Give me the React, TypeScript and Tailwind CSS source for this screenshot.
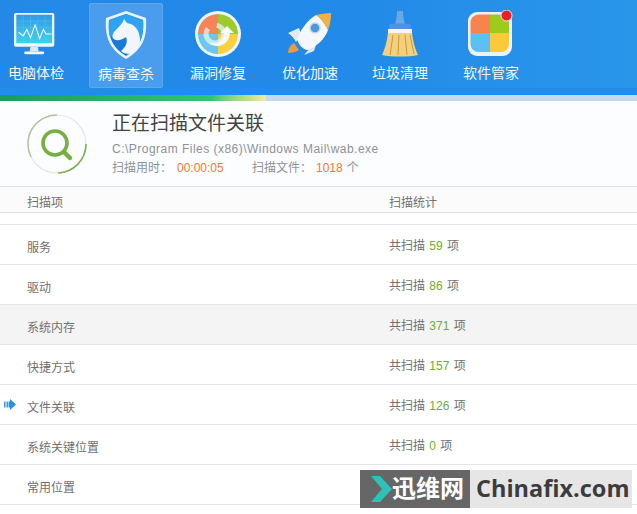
import React from 'react';

const font = { fontFamily: '"Liberation Sans", "Noto Sans CJK SC", sans-serif' };

function Monitor() {
  return (
    <svg width="46" height="44" viewBox="2 0 48 48">
      <defs>
        <linearGradient id="scr" x1="0" y1="0" x2="0" y2="1">
          <stop offset="0" stopColor="#2f9be8" />
          <stop offset="1" stopColor="#3fd0ea" />
        </linearGradient>
      </defs>
      <rect x="2" y="1" width="44" height="37" rx="2" fill="#eef6fc" />
      <rect x="4.5" y="3" width="39" height="31" fill="url(#scr)" />
      <path d="M5 10h38M5 17h38M5 24h38M12 3v31M20 3v31M28 3v31M36 3v31" stroke="#7cc6f2" strokeWidth="0.5" opacity="0.7" />
      <path d="M7 22l5 4 4-7 4 9 5-14 5 15 4-10 3 5h6" fill="none" stroke="#eefaff" strokeWidth="1.2" />
      <path d="M20 38h8l1 5h-10z" fill="#dfe9f1" />
      <rect x="13" y="43" width="22" height="3" rx="1.5" fill="#f4f8fb" />
    </svg>
  );
}

function Shield() {
  return (
    <svg width="44" height="50" viewBox="0 0 44 50">
      <path d="M22 1l20 7c1 16-1 30-20 41C3 38 1 24 2 8z" fill="#e8f3fb" />
      <path d="M22 4l17 6c1 14-1 26-17 36C6 36 4 24 5 10z" fill="#1b78d6" />
      <path d="M22 4l17 6c1 14-1 26-17 36 5-9 6-16-2-24L6 27c-2-6-1-12-1-17z" fill="#2ea3f0" />
      <path d="M20 9l3 4c8 1 13 8 13 17 0 6-3 10-8 13-5 2-9 0-11-2 5-4 7-9 5-14-3 2-7 4-10 3-4-1-4-4-3-6 2-5 9-8 11-15z" fill="#f2f6fa" />
    </svg>
  );
}

function Repair() {
  return (
    <svg width="46" height="46" viewBox="0 0 46 46">
      <circle cx="23" cy="23" r="23" fill="#eef5fa" />
      <path d="M23 23V3A20 20 0 0 0 3 23z" fill="#f58559" />
      <path d="M23 23V3a20 20 0 0 1 20 20z" fill="#9ccb2d" />
      <path d="M23 23h20a20 20 0 0 1-20 20z" fill="#fbd03f" />
      <path d="M23 23v20A20 20 0 0 1 3 23z" fill="#6cc6f2" />
      <circle cx="20" cy="23" r="9" fill="none" stroke="#e6f2f8" strokeWidth="5" opacity="0.75" strokeDasharray="34 10" />
      <path d="M14 31c6 3 14 1 15-9h-4l7-7 7 7h-4c-1 12-13 17-21 9z" fill="#f7f9fb" />
    </svg>
  );
}

function Rocket() {
  return (
    <svg width="44" height="44" viewBox="0 0 44 44">
      <path d="M0 21l11-5 2 6-5 8c-2-4-5-7-8-9z" fill="#e3ebf2" />
      <path d="M16 43l10-12 2 2-2 6c-3 1-7 3-10 4z" fill="#dbe6ee" />
      <path d="M0 41c0-4 3-9 6-10l5 7c-3 2-7 3-11 3z" fill="#ee9a3f" />
      <path d="M28 3C19 8 12 19 9 27c1 5 6 11 11 11 9-4 17-11 20-20-3-6-7-12-12-15z" fill="#f5f8fb" />
      <path d="M43 1c-5 0-10 1-15 2 5 3 9 9 12 15 2-5 3-11 3-17z" fill="#f4b13c" />
      <circle cx="27" cy="16" r="5" fill="#4d97dd" stroke="#c9d8e4" strokeWidth="1.500" />
    </svg>
  );
}

function Broom() {
  return (
    <svg width="38" height="46" viewBox="0 0 38 46">
      <path d="M16 0h6v4l2 10H14l2-10z" fill="#6ca9e4" />
      <path d="M8 14c3-2 19-2 22 0v6H8z" fill="#4e93dc" />
      <rect x="7" y="18" width="24" height="4" fill="#f4f6f8" />
      <path d="M7 22h24c1 8 3 16 6 22-10 2-26 2-36 0 3-6 5-14 6-22z" fill="#f5d07c" />
      <path d="M12 24l-3 20M18 24l-1 20M24 24l2 20M29 24l4 19" stroke="#c9993f" strokeWidth="1" />
    </svg>
  );
}

function Tiles() {
  return (
    <svg width="48" height="48" viewBox="0 0 48 48">
      <rect x="1" y="2" width="44" height="44" rx="9" fill="#eef2f5" />
      <path d="M3.500 13a8 8 0 0 1 8-8.500H23V23H3.500z" fill="#f8834f" />
      <path d="M23 4.500h11a8 8 0 0 1 8 8.500V23H23z" fill="#9ccb1c" />
      <path d="M3.500 23H23v19H11.500a8 8 0 0 1-8-8z" fill="#5dbff2" />
      <path d="M23 23h19v11a8 8 0 0 1-8 8H23z" fill="#fcc93a" />
      <circle cx="39.500" cy="5.500" r="5.500" fill="#e8202a" stroke="#f5e9e9" strokeWidth="1" />
    </svg>
  );
}

function Lens() {
  return (
    <svg width="60" height="60" viewBox="0 0 60 60">
      <circle cx="30" cy="30" r="29" fill="none" stroke="#e4e8e2" strokeWidth="1.2" />
      <path d="M30 1A29 29 0 0 0 4 43" fill="none" stroke="#a8c79a" strokeWidth="1.4" />
      <path d="M59 30A29 29 0 0 1 31 59" fill="none" stroke="#7fb05a" strokeWidth="1.6" />
      <circle cx="28" cy="29" r="12" fill="none" stroke="#76b043" strokeWidth="3.6" />
      <path d="M37 38l6 6" stroke="#76b043" strokeWidth="4.5" strokeLinecap="round" />
    </svg>
  );
}

const tools = [
  { label: '电脑体检', icon: <Monitor />, width: 'w-[72px]' },
  { label: '病毒查杀', icon: <Shield />, active: true, width: 'w-[74px]' },
  { label: '漏洞修复', icon: <Repair />, width: 'w-[76px]' },
  { label: '优化加速', icon: <Rocket />, width: 'w-[74px]' },
  { label: '垃圾清理', icon: <Broom />, width: 'w-[72px]' },
  { label: '软件管家', icon: <Tiles />, width: 'w-[76px]' },
];

const rows = [
  { name: '服务', count: 59 },
  { name: '驱动', count: 86 },
  { name: '系统内存', count: 371, shaded: true },
  { name: '快捷方式', count: 157 },
  { name: '文件关联', count: 126, current: true },
  { name: '系统关键位置', count: 0 },
  { name: '常用位置', count: null },
];

export default function App() {
  return (
    <div className="relative w-[637px] h-[514px] overflow-hidden bg-white" style={font}>
      {/* Toolbar */}
      <div className="flex h-[95px] pt-[3px] gap-[17px] bg-gradient-to-r from-[#2488e6] via-[#2189e8] to-[#2a96ea] border-b-[7px] border-[#1f8cf0]">
        {tools.map((tool) => (
          <div
            key={tool.label}
            className={`flex flex-col items-center shrink-0 h-[85px] rounded-[2px] ${tool.width} ${
              tool.active ? 'bg-[#4a9cec] border border-[#5ea9ee]' : ''
            }`}
          >
            <div className="flex items-center justify-center h-[56px] mt-[3px]">{tool.icon}</div>
            <span className="text-[14px] leading-[18px] mt-[2px] whitespace-nowrap text-[#f0f7fe]">{tool.label}</span>
          </div>
        ))}
      </div>

      {/* Progress */}
      <div className="h-[6px] bg-[#c5d9ec]">
        <div className="h-full w-[266px] bg-gradient-to-r from-[#1f9a5d] via-[#2ec76f] via-80% to-[#f4ea9a]" />
      </div>

      {/* Scan status */}
      <div className="flex items-center h-[86px] pl-[27px] border-b border-[#dfe2e4] bg-[#fcfdfe]">
        <Lens />
        <div className="ml-[25px] min-w-0 pt-[1px]">
          <div className="text-[19px] leading-[24px] text-[#444]">正在扫描文件关联</div>
          <div className="text-[12px] leading-[16px] mt-[5px] text-[#8d9298] tracking-[0.48px]">
            C:\Program Files (x86)\Windows Mail\wab.exe
          </div>
          <div className="flex text-[12px] leading-[16px] mt-[3px] text-[#8d9298]">
            <span className="w-[65px]">扫描用时：</span>
            <span className="w-[75px] text-[#ee7a3c]">00:00:05</span>
            <span className="w-[64px]">扫描文件：</span>
            <span className="text-[#ee7a3c]">1018</span>
            <span className="ml-[4px]">个</span>
          </div>
        </div>
      </div>

      {/* Table head */}
      <div className="flex items-center h-[26px] pl-[27px] pt-[6px] border-b border-[#dfe2e4] text-[12px] text-[#707070] bg-[#fbfbfb]">
        <span className="w-[362px]">扫描项</span>
        <span>扫描统计</span>
      </div>
      <div className="h-[12px] border-b border-[#e5e5e5]" />

      {/* Rows */}
      {rows.map((row) => (
        <div
          key={row.name}
          className={`relative flex items-center h-[40px] pl-[27px] pt-[6px] border-b border-[#e5e5e5] text-[12px] text-[#707070] ${
            row.shaded ? 'bg-[#f4f4f4]' : ''
          }`}
        >
          {row.current && (
            <svg className="absolute left-[4px] top-[14px]" width="12" height="11" viewBox="0 0 12 11">
              <rect x="0" y="2.500" width="1.500" height="6" fill="#3b9ae6" />
              <rect x="2.500" y="2.500" width="2" height="6" fill="#3b9ae6" />
              <path d="M5 2.500h1V0l6 5.500L6 11V8.500H5z" fill="#2b8fe2" />
            </svg>
          )}
          <span className="w-[362px]">{row.name}</span>
          {row.count !== null && (
            <span className="mb-[4px]">
              共扫描 <span className="mx-[1px] text-[#6fae2e]">{row.count}</span> 项
            </span>
          )}
        </div>
      ))}

      {/* Watermark */}
      <div className="absolute left-[360px] top-[470px] flex h-[38px] w-[272px]">
        <div className="flex items-center shrink-0 w-[110px] bg-[#666666]">
          <svg className="ml-[11px] shrink-0" width="21" height="26" viewBox="0 0 21 26">
            <path d="M0 0h9l12 13L9 26H0l11-13z" fill="#2fc0b8" />
          </svg>
          <span className="text-[24px] font-bold leading-none text-white whitespace-nowrap">迅维网</span>
        </div>
        <div className="flex items-center min-w-0 flex-1 pl-[6px] bg-[#e6e6e6] text-[23.5px] font-bold text-[#3c3c3c] whitespace-nowrap" style={{ fontFamily: '"Open Sans", sans-serif' }}>
          Chinafix.com
        </div>
      </div>
    </div>
  );
}
